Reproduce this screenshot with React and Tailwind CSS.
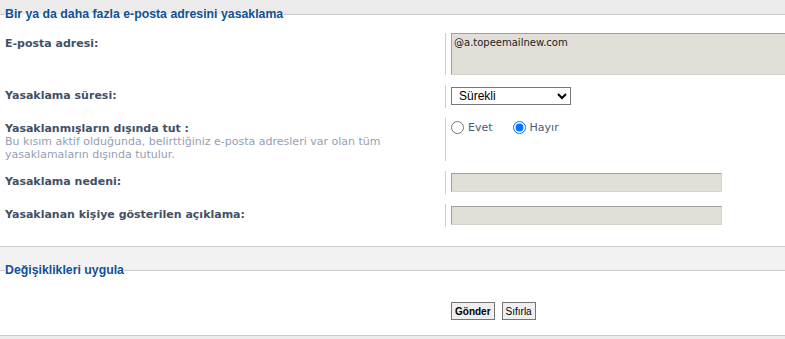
import { useState } from 'react'

const label = "font-bold text-[#425067]"
const field = "bg-[#e2ded8] border border-t-[#a3a09b] border-l-[#a3a09b] border-b-[#d6d2cc] border-r-[#d6d2cc]"

function Row({ dt, children, ddClass = '' }) {
  return (
    <div className="flex py-[5px]">
      <div className="w-[445px] shrink-0 pl-[5px] pt-[4px] text-[11px] leading-[13px]">{dt}</div>
      <div className={`flex-1 border-l border-[#cccccc] pl-[5px] text-[11px] leading-[13px] ${ddClass}`}>{children}</div>
    </div>
  )
}

export default function App() {
  const [exclude, setExclude] = useState('0')

  return (
    <div className="w-[785px] h-[339px] overflow-hidden bg-[#ebebeb] font-['DejaVu_Sans',sans-serif]">
      {/* Ban form */}
      <fieldset className="bg-white border-t border-b border-[#cccccc] pb-[14px]">
        <legend className="ml-[5px] text-[12.3px] leading-[28px] font-bold text-[#115098] font-['Liberation_Sans',Arial,sans-serif]">
          Bir ya da daha fazla e-posta adresini yasaklama
        </legend>

        <Row dt={<div className={label}>E-posta adresi:</div>}>
          <textarea
            defaultValue="@a.topeemailnew.com"
            className={`${field} block w-[340px] h-[42px] px-[2px] py-[3px] text-[10px] leading-[12px] text-[#222] resize-none`}
          />
        </Row>

        <Row dt={<div className={label}>Yasaklama süresi:</div>} ddClass="pt-[2px] pb-[3px]">
          <select className="block w-[120px] h-[18px] border border-[#767676] bg-white text-[12px] leading-[14px] text-black pl-[3px] font-['Liberation_Sans',Arial,sans-serif]">
            <option>Sürekli</option>
          </select>
        </Row>

        <Row
          dt={
            <div>
              <div className={label}>Yasaklanmışların dışında tut :</div>
              <div className="text-[11px] leading-[13px] text-[#94a0b2] w-[400px]">
                Bu kısım aktif olduğunda, belirttiğiniz e-posta adresleri var olan tüm yasaklamaların dışında tutulur.
              </div>
            </div>
          }
          ddClass="pt-[3px]"
        >
          <div className="flex items-center text-[#4c5a70]">
            <label className="flex items-center">
              <input type="radio" name="ex" checked={exclude === '1'} onChange={() => setExclude('1')} className="w-[13px] h-[13px] m-0 mr-[4px]" />
              Evet
            </label>
            <label className="flex items-center ml-[20px]">
              <input type="radio" name="ex" checked={exclude === '0'} onChange={() => setExclude('0')} className="w-[13px] h-[13px] m-0 mr-[4px]" />
              Hayır
            </label>
          </div>
        </Row>

        <Row dt={<div className={label}>Yasaklama nedeni:</div>} ddClass="py-[2px]">
          <input className={`${field} block w-[271px] h-[19px]`} />
        </Row>

        <Row dt={<div className={label}>Yasaklanan kişiye gösterilen açıklama:</div>} ddClass="py-[2px]">
          <input className={`${field} block w-[271px] h-[19px]`} />
        </Row>
      </fieldset>

      {/* Submit */}
      <div className="bg-[#f2f2f2] pt-[9px]">
        <fieldset className="bg-white border-t border-b border-[#cccccc] pt-[18px] pb-[15px]">
          <legend className="ml-[5px] text-[12.3px] leading-[28px] font-bold text-[#115098] font-['Liberation_Sans',Arial,sans-serif]">
            Değişiklikleri uygula
          </legend>
          <div className="flex gap-[7px] pl-[451px] font-['Liberation_Sans',Arial,sans-serif] text-[10px] text-black">
            <button className="h-[18px] px-[3px] bg-[#efefef] border border-[#767676] font-bold">Gönder</button>
            <button className="h-[18px] px-[3px] bg-[#efefef] border border-[#767676]">Sıfırla</button>
          </div>
        </fieldset>
      </div>
    </div>
  )
}
